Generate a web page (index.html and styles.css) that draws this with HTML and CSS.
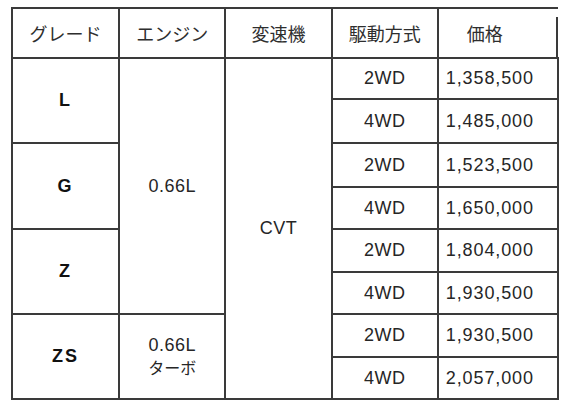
FILE: index.html
```html
<!DOCTYPE html>
<html lang="ja">
<head>
<meta charset="utf-8">
<title>価格表</title>
<link rel="stylesheet" href="styles.css">
</head>
<body>
<table class="price-table">
  <colgroup>
    <col class="c-grade">
    <col class="c-engine">
    <col class="c-trans">
    <col class="c-drive">
    <col class="c-price">
  </colgroup>
  <thead>
    <tr class="head-row">
      <th>グレード</th>
      <th>エンジン</th>
      <th>変速機</th>
      <th>駆動方式</th>
      <th class="h-price">価格</th>
    </tr>
  </thead>
  <tbody>
    <tr class="r1">
      <td rowspan="2" class="grade">L</td>
      <td rowspan="6" class="latin">0.66L</td>
      <td rowspan="8" class="latin">CVT</td>
      <td class="latin">2WD</td>
      <td class="price">1,358,500</td>
    </tr>
    <tr class="r2">
      <td class="latin">4WD</td>
      <td class="price">1,485,000</td>
    </tr>
    <tr class="r3">
      <td rowspan="2" class="grade">G</td>
      <td class="latin">2WD</td>
      <td class="price">1,523,500</td>
    </tr>
    <tr class="r4">
      <td class="latin">4WD</td>
      <td class="price">1,650,000</td>
    </tr>
    <tr class="r5">
      <td rowspan="2" class="grade">Z</td>
      <td class="latin">2WD</td>
      <td class="price">1,804,000</td>
    </tr>
    <tr class="r6">
      <td class="latin">4WD</td>
      <td class="price">1,930,500</td>
    </tr>
    <tr class="r7">
      <td rowspan="2" class="grade">ZS</td>
      <td rowspan="2" class="engine-turbo"><span class="latin-line">0.66L</span><span class="jp-line">ターボ</span></td>
      <td class="latin">2WD</td>
      <td class="price">1,930,500</td>
    </tr>
    <tr class="r8">
      <td class="latin">4WD</td>
      <td class="price">2,057,000</td>
    </tr>
  </tbody>
</table>
</body>
</html>
```

FILE: styles.css
```css
html, body {
  margin: 0;
  padding: 0;
  background: #ffffff;
}

.price-table {
  margin: 7px 0 0 11px;
  border-collapse: collapse;
  table-layout: fixed;
  width: 548px;
  color: #262626;
  font-family: "Liberation Sans", Arial, sans-serif;
}

.c-grade { width: 107px; }
.c-engine { width: 106px; }
.c-trans { width: 106px; }
.c-drive { width: 106px; }
.c-price { width: 120px; }

.price-table th,
.price-table td {
  border: 2px solid #3a3a3a;
  padding: 0;
  text-align: center;
  vertical-align: middle;
}

.price-table th {
  font-family: "Noto Sans CJK JP", sans-serif;
  font-weight: 400;
  font-size: 18px;
  color: #2e2e2e;
}

.head-row { height: 50px; }

.price-table th.h-price {
  text-align: left;
  padding-left: 28px;
  border-right: none;
  background: linear-gradient(#3a3a3a, #3a3a3a) right bottom / 2px 40px no-repeat;
}

.r1 { height: 41px; }
.r2 { height: 44px; }
.r3 { height: 44px; }
.r4 { height: 42px; }
.r5 { height: 43px; }
.r6 { height: 42px; }
.r7 { height: 43px; }
.r8 { height: 42px; }

.latin {
  font-size: 18px;
  letter-spacing: 0.5px;
}

.price-table td.price {
  font-size: 18px;
  letter-spacing: 0.9px;
  text-align: left;
  padding-left: 7px;
}

.grade {
  font-size: 18px;
  font-weight: 700;
  letter-spacing: 2px;
  color: #111111;
}

.latin-line {
  display: block;
  font-size: 18px;
  line-height: 20px;
  letter-spacing: 0.5px;
}

.jp-line {
  display: block;
  font-family: "Noto Sans CJK JP", sans-serif;
  font-size: 16px;
  line-height: 22px;
  margin-top: 1px;
}
```
